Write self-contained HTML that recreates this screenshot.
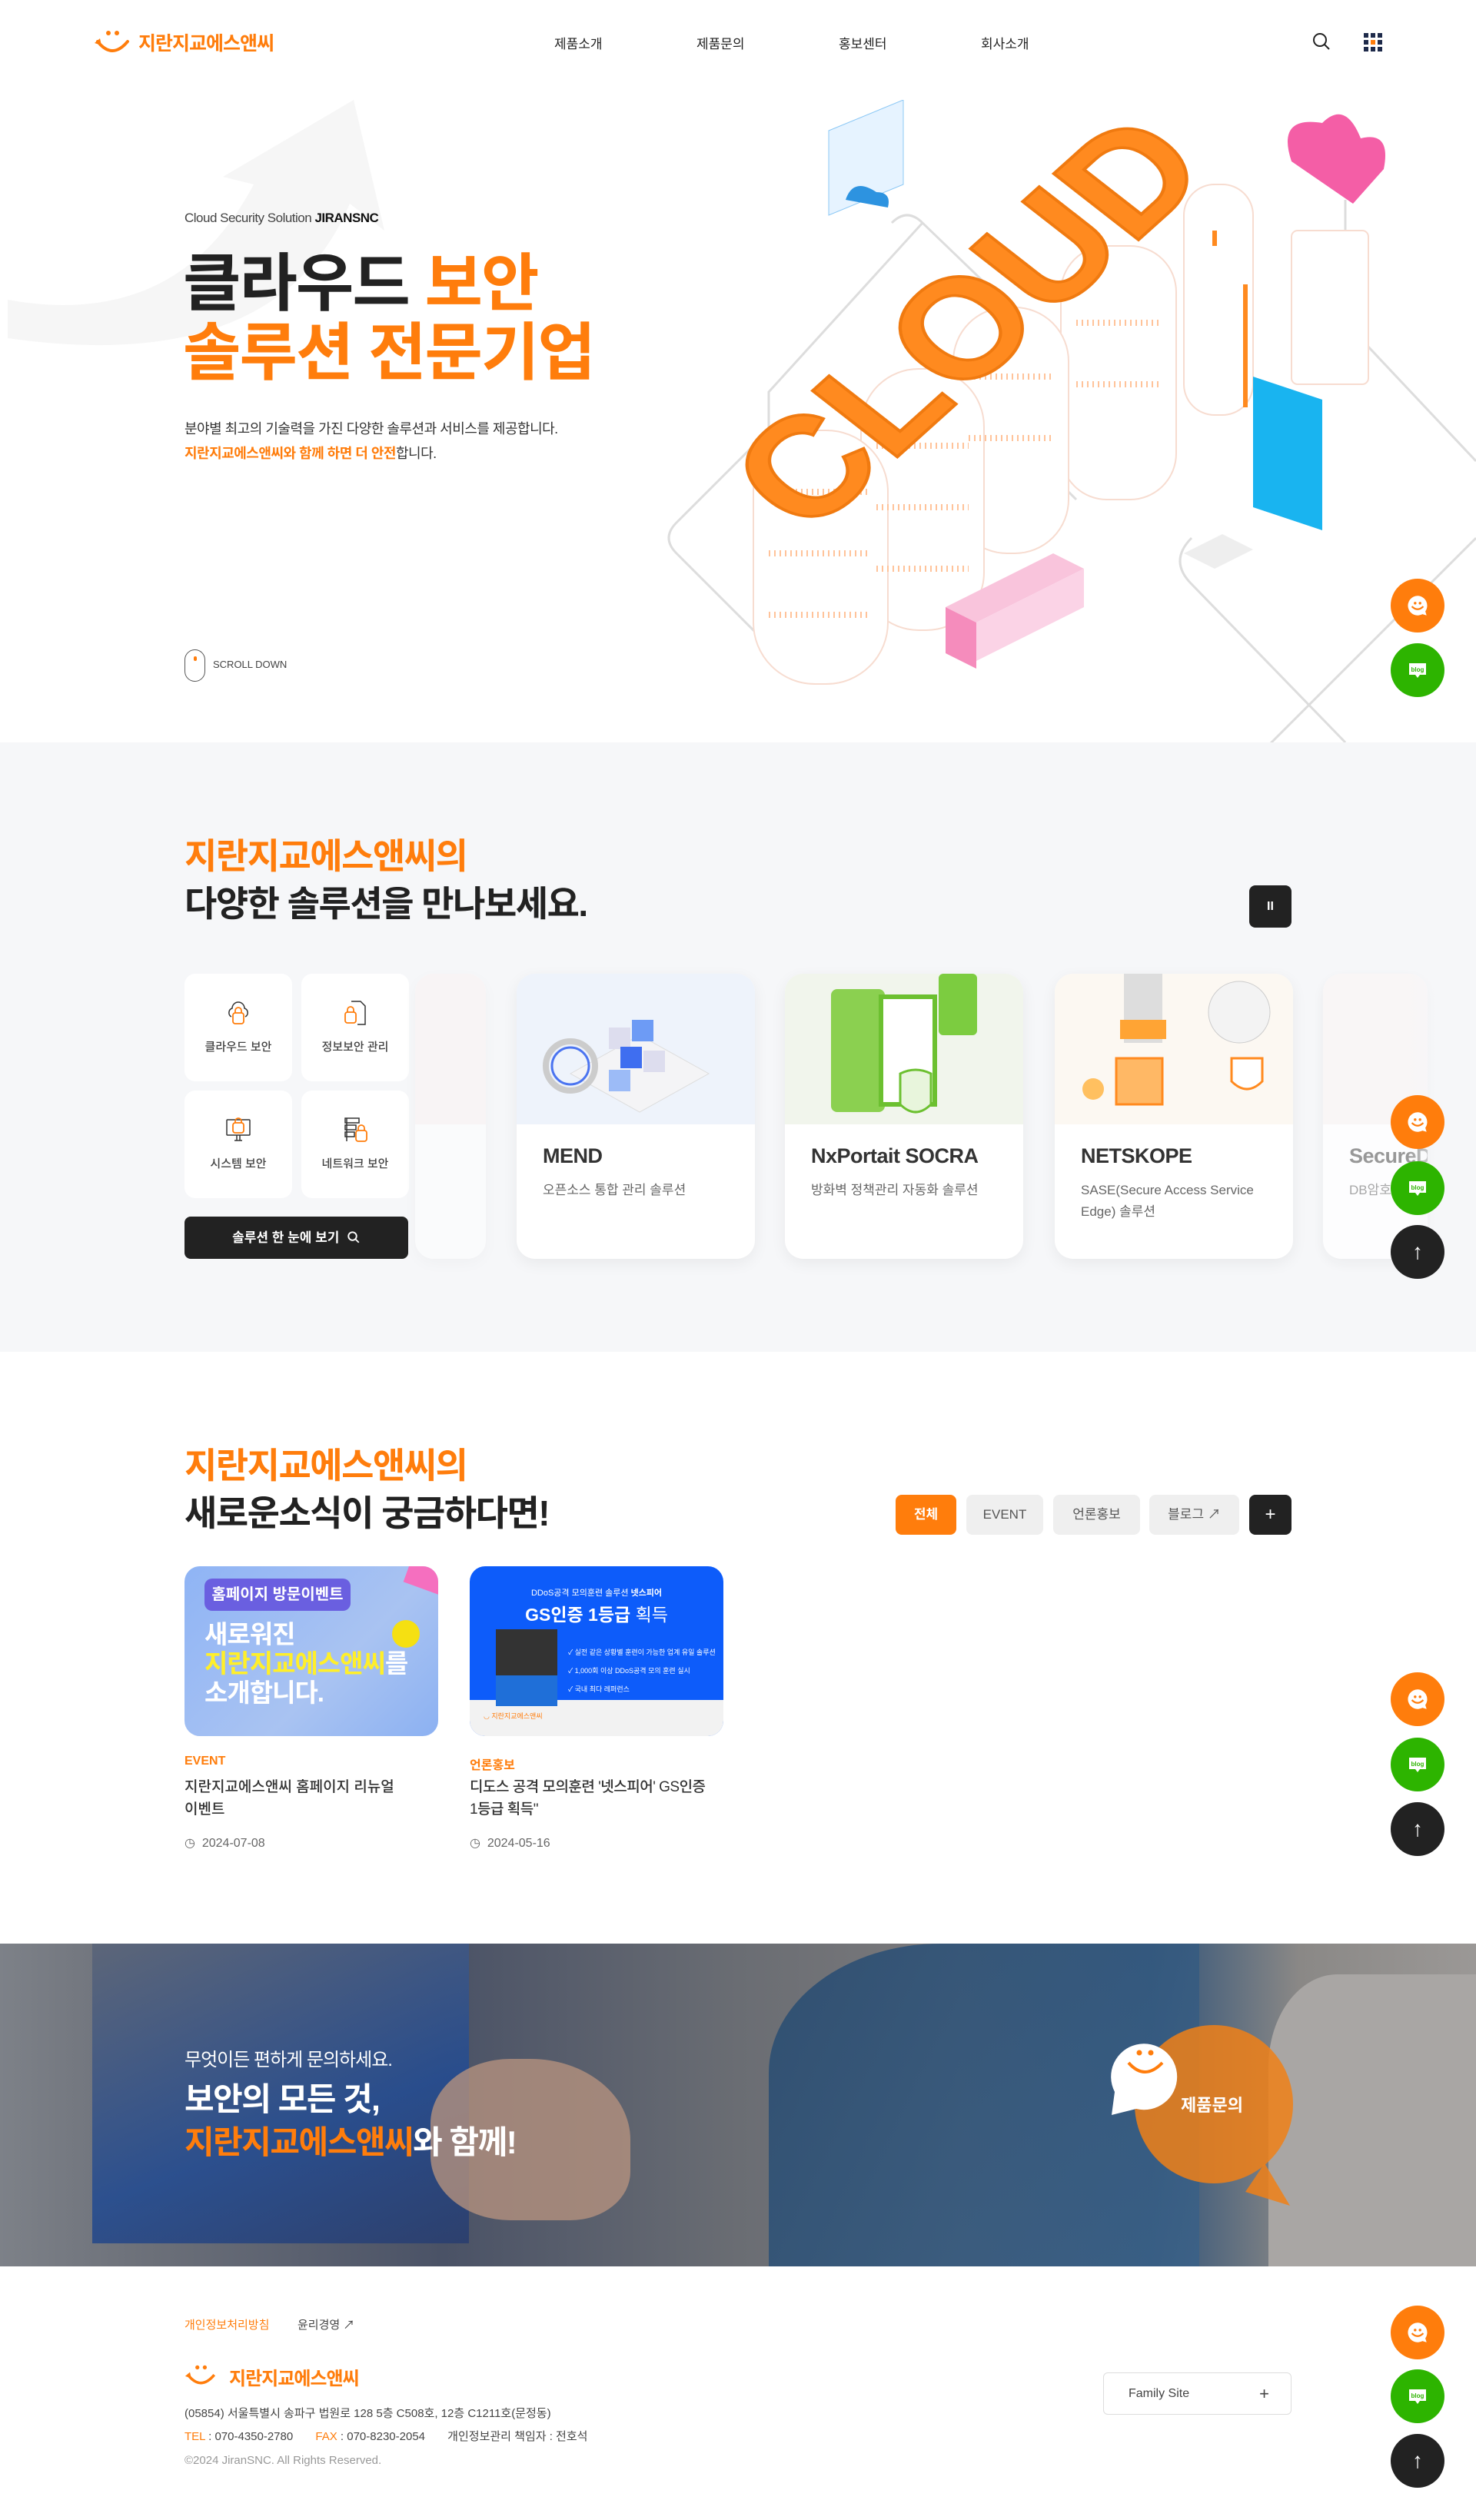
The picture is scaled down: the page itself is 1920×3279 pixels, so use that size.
<!DOCTYPE html>
<html lang="ko"><head><meta charset="utf-8">
<style>
*{margin:0;padding:0;box-sizing:border-box}
html{height:3279px;overflow:hidden}
body{width:1920px;height:3279px;position:relative;overflow:hidden;background:#fff;font-family:"Liberation Sans","Noto Sans CJK KR",sans-serif;color:#222;word-break:keep-all}
.a{position:absolute}
.o{color:#ff7d0c}
.nav{font-size:17px;color:#222;top:43px}
.tile{position:absolute;width:140px;height:140px;background:#fff;border-radius:14px;text-align:center;font-size:15px;color:#444;font-weight:500}
.tile svg{margin-top:34px}
.tile div{margin-top:12px}
.card{position:absolute;top:1267px;width:310px;height:371px;background:#fff;border-radius:24px;overflow:hidden;box-shadow:0 6px 20px rgba(0,0,0,.06)}
.card .img{height:196px}
.card h3{position:absolute;left:34px;top:222px;font-size:27px;color:#333;font-weight:700;letter-spacing:-.5px}
.card p{position:absolute;left:34px;top:268px;font-size:17px;color:#666;line-height:28px;width:250px}
.tab{position:absolute;top:1945px;height:52px;border-radius:8px;background:#efefef;color:#555;font-size:17px;line-height:52px;text-align:center}
.fb{position:absolute;left:1809px;width:70px;height:70px;border-radius:50%;display:flex;align-items:center;justify-content:center;color:#fff;font-size:28px}
.fo{background:#ff7d0c}.fg{background:#2db400}.fk{background:#222}
</style></head><body>

<!-- header -->
<svg class="a" style="left:122px;top:38px" width="50" height="34" viewBox="0 0 50 34"><circle cx="19" cy="5" r="3" fill="#ff7d0c"/><circle cx="30" cy="5" r="3" fill="#ff7d0c"/><path d="M5 16 Q24 40 44 16" stroke="#ff7d0c" stroke-width="4" fill="none" stroke-linecap="round"/><path d="M1 18 L8 12 L10 21Z" fill="#ff7d0c"/></svg>
<div class="a o" style="left:180px;top:37px;font-size:25px;font-weight:700;letter-spacing:-1px">지란지교에스앤씨</div>
<div class="a nav" style="left:721px">제품소개</div>
<div class="a nav" style="left:906px">제품문의</div>
<div class="a nav" style="left:1091px">홍보센터</div>
<div class="a nav" style="left:1276px">회사소개</div>
<svg class="a" style="left:1707px;top:42px" width="24" height="24" viewBox="0 0 24 24"><circle cx="10" cy="10" r="8" stroke="#222" stroke-width="2" fill="none"/><path d="M16 16 L22 22" stroke="#222" stroke-width="2"/></svg>
<svg class="a" style="left:1774px;top:43px" width="25" height="25" viewBox="0 0 25 25"><g fill="#1e2a4a"><rect x="0" y="0" width="6" height="6"/><rect x="9" y="0" width="6" height="6"/><rect x="18" y="0" width="6" height="6"/><rect x="0" y="9" width="6" height="6"/><rect x="9" y="9" width="6" height="6" fill="#ff7d0c"/><rect x="18" y="9" width="6" height="6"/><rect x="0" y="18" width="6" height="6"/><rect x="9" y="18" width="6" height="6"/><rect x="18" y="18" width="6" height="6"/></g></svg>

<!-- hero -->
<svg class="a" style="left:0;top:130px" width="560" height="330" viewBox="0 0 560 330"><path d="M10 260 Q230 300 330 110 L290 100 L460 0 L500 170 L455 135 Q360 360 10 310Z" fill="#f6f6f6"/></svg>
<div class="a" style="left:240px;top:274px;font-size:17px;color:#444;letter-spacing:-.5px">Cloud Security Solution <b style="color:#111">JIRANSNC</b></div>
<div class="a" style="left:238px;top:325px;font-size:82px;font-weight:700;line-height:90px;letter-spacing:-2px;color:#222">클라우드 <span class="o">보안</span><br><span class="o">솔루션 전문기업</span></div>
<div class="a" style="left:240px;top:542px;font-size:18px;color:#333;line-height:32px;letter-spacing:-.5px">분야별 최고의 기술력을 가진 다양한 솔루션과 서비스를 제공합니다.<br><b class="o">지란지교에스앤씨와 함께 하면 더 안전</b>합니다.</div>
<div class="a" style="left:240px;top:845px;width:27px;height:42px;border:1.5px solid #555;border-radius:14px"><div style="width:4px;height:6px;background:#ff7d0c;border-radius:2px;margin:8px auto"></div></div>
<div class="a" style="left:277px;top:857px;font-size:13px;color:#444">SCROLL DOWN</div>

<svg class="a" style="left:860px;top:130px" width="1060" height="836" viewBox="860 130 1060 836">
<g stroke="#ddd" stroke-width="3" fill="none">
<path d="M1160 290 Q1180 270 1200 290 L1480 560"/>
<path d="M1200 290 L1000 510 L1000 560"/>
<path d="M1750 260 L1750 410 Q1750 420 1760 430 L1920 600"/>
<path d="M1000 560 L880 680 Q860 700 880 720 L1020 860 Q1040 880 1060 860 L1310 600 Q1330 580 1350 600 L1400 650"/>
<path d="M1920 700 L1630 990"/>
<path d="M1550 700 Q1520 730 1550 760 L1750 966"/>
</g>
<g fill="#fff" stroke="#f7dcd0" stroke-width="2">
<rect x="1680" y="300" width="100" height="200" rx="8"/>
<rect x="1540" y="240" width="90" height="300" rx="40"/>
<rect x="1380" y="320" width="150" height="330" rx="60"/>
<rect x="1240" y="400" width="150" height="320" rx="70"/>
<rect x="1120" y="480" width="160" height="340" rx="75"/>
<rect x="980" y="560" width="175" height="330" rx="80"/>
</g>
<g fill="none" stroke="#ffc39a" stroke-width="8" stroke-dasharray="2 5">
<path d="M1000 640 h130 M1000 720 h130 M1000 800 h130 M1140 580 h120 M1140 660 h120 M1140 740 h120 M1260 490 h110 M1260 570 h110 M1400 420 h110 M1400 500 h110"/>
</g>
<path d="M1580 320 L1580 300 M1620 370 L1620 530" stroke="#ff8a1f" stroke-width="6"/>
<g font-family="Liberation Sans,sans-serif" font-weight="700" font-size="200" fill="#ff8a1f" stroke="#f07a10" stroke-width="4" transform="translate(1050 700) rotate(-42) skewX(10)"><text x="0" y="0">CLOUD</text></g>
<path d="M1230 790 L1370 720 L1410 740 L1270 810Z" fill="#f9c4dc"/><path d="M1230 790 L1270 810 L1270 870 L1230 850Z" fill="#f58cbc"/><path d="M1270 810 L1410 740 L1410 790 L1270 860Z" fill="#fbd3e6"/>
<path d="M1078 170 L1175 130 L1175 240 L1078 280Z" fill="#e6f3ff" stroke="#8cc8f5"/>
<path d="M1100 260 q10 -30 40 -10 q20 0 15 20z" fill="#2d93e0"/>
<path d="M1630 490 L1720 520 L1720 690 L1630 660Z" fill="#19b4f0"/>
<path d="M1680 210 q-20 -60 40 -50 q30 -30 50 20 q40 -10 30 40 L1760 265Z" fill="#f45ea6"/>
<path d="M1540 720 L1590 695 L1630 715 L1580 740Z" fill="#eee"/>
</svg>

<!-- solutions -->
<div class="a" style="left:0;top:966px;width:1920px;height:793px;background:#f6f7f9"></div>
<div class="a" style="left:240px;top:1083px;font-size:46px;font-weight:700;line-height:62px;letter-spacing:-1.5px"><span class="o">지란지교에스앤씨의</span><br>다양한 솔루션을 만나보세요.</div>
<div class="a" style="left:1625px;top:1152px;width:55px;height:55px;border-radius:8px;background:#222;color:#fff;text-align:center;line-height:55px;font-size:16px;font-weight:700">II</div>

<div class="tile" style="left:240px;top:1267px"><svg width="34" height="34" viewBox="0 0 34 34" fill="none"><path d="M8 22 a6 6 0 0 1 1-11 a8 8 0 0 1 16 0 a6 6 0 0 1 1 11" stroke="#333" stroke-width="1.5"/><rect x="10" y="17" width="14" height="14" rx="3" stroke="#ff7d0c" stroke-width="1.8"/><path d="M13 17 v-3 a4 4 0 0 1 8 0 v3" stroke="#ff7d0c" stroke-width="1.8"/></svg><div>클라우드 보안</div></div>
<div class="tile" style="left:392px;top:1267px"><svg width="34" height="34" viewBox="0 0 34 34" fill="none"><path d="M12 2 h12 l6 6 v24 h-10" stroke="#333" stroke-width="1.5"/><rect x="4" y="16" width="14" height="14" rx="3" stroke="#ff7d0c" stroke-width="1.8"/><path d="M7 16 v-3 a4 4 0 0 1 8 0 v3" stroke="#ff7d0c" stroke-width="1.8"/></svg><div>정보보안 관리</div></div>
<div class="tile" style="left:240px;top:1419px"><svg width="34" height="34" viewBox="0 0 34 34" fill="none"><rect x="2" y="4" width="30" height="20" rx="1" stroke="#333" stroke-width="1.5"/><path d="M12 31 h10 M15 24 v7 M19 24 v7" stroke="#333" stroke-width="1.5"/><rect x="10" y="8" width="14" height="13" rx="3" stroke="#ff7d0c" stroke-width="1.8"/><path d="M13 8 v-2 a4 4 0 0 1 8 0 v2" stroke="#ff7d0c" stroke-width="1.8"/></svg><div>시스템 보안</div></div>
<div class="tile" style="left:392px;top:1419px"><svg width="34" height="34" viewBox="0 0 34 34" fill="none"><path d="M4 2 h18 v6 h-18z M4 11 h14 v6 h-14z M4 20 h12 v6 h-12z M6 2 v30" stroke="#333" stroke-width="1.5"/><rect x="18" y="18" width="14" height="14" rx="3" stroke="#ff7d0c" stroke-width="1.8"/><path d="M21 18 v-3 a4 4 0 0 1 8 0 v3" stroke="#ff7d0c" stroke-width="1.8"/></svg><div>네트워크 보안</div></div>
<div class="a" style="left:240px;top:1583px;width:291px;height:55px;border-radius:8px;background:#222;color:#fff;font-size:17px;font-weight:700;text-align:center;line-height:55px">솔루션 한 눈에 보기 &nbsp;<svg width="18" height="18" viewBox="0 0 24 24" style="vertical-align:-3px"><circle cx="10" cy="10" r="7" stroke="#fff" stroke-width="2.5" fill="none"/><path d="M15 15 L21 21" stroke="#fff" stroke-width="2.5"/></svg></div>

<div class="card" style="left:540px;width:92px;opacity:.5"><div class="img" style="background:#fbf3f3"></div></div>
<div class="card" style="left:672px"><div class="img" style="background:#eef3fb"><svg width="310" height="196" viewBox="0 0 310 196"><path d="M70 130 L160 80 L250 130 L160 180Z" fill="#f4f4f6" stroke="#ddd"/><g fill="#dde"><rect x="120" y="70" width="28" height="28"/><rect x="150" y="60" width="28" height="28" fill="#6d9bf5"/><rect x="135" y="95" width="28" height="28" fill="#3f6ef0"/><rect x="165" y="100" width="28" height="28"/><rect x="120" y="125" width="28" height="28" fill="#9cbbf7"/></g><circle cx="70" cy="120" r="32" fill="none" stroke="#ccc" stroke-width="8"/><circle cx="70" cy="120" r="24" fill="none" stroke="#4b74f0" stroke-width="3"/></svg></div><h3>MEND</h3><p>오픈소스 통합 관리 솔루션</p></div>
<div class="card" style="left:1021px"><div class="img" style="background:#f1f5ec"><svg width="310" height="196" viewBox="0 0 310 196"><rect x="60" y="20" width="70" height="160" rx="8" fill="#8bd050"/><rect x="125" y="30" width="70" height="140" fill="#fff" stroke="#6cc030" stroke-width="6"/><rect x="200" y="0" width="50" height="80" rx="6" fill="#7ccc40"/><path d="M150 130 q20 -10 40 0 v40 q-20 20 -40 0z" fill="#e8f5dc" stroke="#6cc030" stroke-width="3"/></svg></div><h3>NxPortait SOCRA</h3><p>방화벽 정책관리 자동화 솔루션</p></div>
<div class="card" style="left:1372px"><div class="img" style="background:#fcf8f2"><svg width="310" height="196" viewBox="0 0 310 196"><rect x="90" y="0" width="50" height="90" fill="#ddd"/><rect x="85" y="60" width="60" height="25" fill="#ffa434"/><rect x="80" y="110" width="60" height="60" fill="#ffb865" stroke="#ff8a1f" stroke-width="3"/><circle cx="240" cy="50" r="40" fill="#f3f3f3" stroke="#ccc"/><path d="M230 110 h40 v30 q-20 20 -40 0z" fill="#fff" stroke="#ff8a1f" stroke-width="3"/><circle cx="50" cy="150" r="14" fill="#ffc060"/></svg></div><h3>NETSKOPE</h3><p>SASE(Secure Access Service Edge) 솔루션</p></div>
<div class="card" style="left:1721px;width:136px;opacity:.85"><div class="img" style="background:#faf6f6"></div><h3 style="color:#888">SecureDB</h3><p style="color:#999">DB암호화</p></div>
<div class="a" style="left:1830px;top:1260px;width:90px;height:400px;background:linear-gradient(90deg,rgba(246,247,249,0),#f6f7f9 60%)"></div>

<!-- news -->
<div class="a" style="left:240px;top:1876px;font-size:46px;font-weight:700;line-height:62px;letter-spacing:-1.5px"><span class="o">지란지교에스앤씨의</span><br>새로운소식이 궁금하다면!</div>
<div class="tab" style="left:1165px;width:79px;background:#ff7d0c;color:#fff;font-weight:700">전체</div>
<div class="tab" style="left:1257px;width:100px">EVENT</div>
<div class="tab" style="left:1370px;width:113px">언론홍보</div>
<div class="tab" style="left:1495px;width:117px">블로그 ↗</div>
<div class="tab" style="left:1625px;width:55px;background:#222;color:#fff;font-size:24px">+</div>

<div class="a" style="left:240px;top:2038px;width:330px;height:221px;border-radius:20px;overflow:hidden;background:linear-gradient(135deg,#8fb4f5,#a9c3f2 60%,#8cb1f2)">
<div class="a" style="left:26px;top:16px;width:190px;height:42px;border-radius:10px;background:#6a5fe0;color:#fff;font-weight:700;font-size:20px;line-height:42px;text-align:center">홈페이지 방문이벤트</div>
<div class="a" style="left:270px;top:70px;width:36px;height:36px;border-radius:50%;background:#f5e012"></div>
<div class="a" style="left:290px;top:-10px;width:50px;height:40px;background:#f56fbf;transform:rotate(20deg)"></div>
<div class="a" style="left:26px;top:70px;color:#fff;font-size:33px;font-weight:700;line-height:38px;letter-spacing:-1px">새로워진<br><span style="color:#ffef2a">지란지교에스앤씨</span>를<br>소개합니다.</div></div>
<div class="a" style="left:611px;top:2038px;width:330px;height:221px;border-radius:20px;overflow:hidden;background:#0d5cfa">
<div class="a" style="left:0;top:174px;width:330px;height:47px;background:#f2f2f2"></div>
<div class="a" style="left:0;top:26px;width:330px;text-align:center;color:#fff;font-size:11px">DDoS공격 모의훈련 솔루션 <b>넷스피어</b></div>
<div class="a" style="left:0;top:44px;width:330px;text-align:center;color:#fff;font-size:23px;font-weight:700">GS인증 1등급 <span style="font-weight:400">획득</span></div>
<div class="a" style="left:34px;top:82px;width:80px;height:100px;background:linear-gradient(#333 0 60%,#1f6fd8 60%)"></div>
<div class="a" style="left:128px;top:100px;color:#fff;font-size:9px;line-height:24px">✓ 실전 같은 상황별 훈련이 가능한 업계 유일 솔루션<br>✓ 1,000회 이상 DDoS공격 모의 훈련 실시<br>✓ 국내 최다 레퍼런스</div>
<div class="a" style="left:18px;top:188px;color:#ff7d0c;font-size:9px">◡ 지란지교에스앤씨</div></div>
<div class="a o" style="left:240px;top:2283px;font-size:16px;font-weight:700">EVENT</div>
<div class="a" style="left:240px;top:2311px;font-size:19px;color:#333;line-height:29px;font-weight:500;width:320px">지란지교에스앤씨 홈페이지 리뉴얼 이벤트</div>
<div class="a" style="left:240px;top:2388px;font-size:16px;color:#666">◷ &nbsp;2024-07-08</div>
<div class="a o" style="left:611px;top:2283px;font-size:16px;font-weight:700">언론홍보</div>
<div class="a" style="left:611px;top:2311px;font-size:19px;color:#333;line-height:29px;font-weight:500;width:345px;letter-spacing:-.5px">디도스 공격 모의훈련 '넷스피어' GS인증 1등급 획득"</div>
<div class="a" style="left:611px;top:2388px;font-size:16px;color:#666">◷ &nbsp;2024-05-16</div>

<!-- banner -->
<div class="a" style="left:0;top:2529px;width:1920px;height:420px;overflow:hidden;background:linear-gradient(90deg,#7d8188 0,#6c7079 10%,#4a5266 30%,#6a6d73 50%,#7b7a7c 65%,#2f5278 78%,#8a8886 88%,#9b9896 100%)">
<div class="a" style="left:120px;top:0;width:490px;height:390px;background:linear-gradient(160deg,#5a6478,#254c90 60%,#2a3e6e);opacity:.9"></div>
<div class="a" style="left:560px;top:150px;width:260px;height:210px;border-radius:40% 50% 30% 40%;background:#b4917e;opacity:.8"></div>
<div class="a" style="left:1000px;top:0;width:560px;height:420px;background:linear-gradient(120deg,#2a4c70,#3b6187);border-radius:40% 0 0 0;opacity:.9"></div>
<div class="a" style="left:1650px;top:40px;width:300px;height:400px;background:#a9a6a4;border-radius:30% 0 0 0"></div>
<div class="a" style="left:1476px;top:106px;width:206px;height:206px;border-radius:50%;background:rgba(240,128,24,.85)"></div>
</div>
<svg class="a" style="left:1440px;top:2630px" width="250" height="250" viewBox="0 0 250 250"><path d="M205 185 L238 240 L180 222Z" fill="rgba(240,128,24,.85)"/><path d="M10 92 a43 43 0 1 1 28 22 L6 122Z" fill="#fff"/><circle cx="42" cy="41" r="3.5" fill="#ff7d0c"/><circle cx="57" cy="41" r="3.5" fill="#ff7d0c"/><path d="M28 54 Q49 78 72 54" stroke="#ff7d0c" stroke-width="4" fill="none"/></svg>
<div class="a" style="left:1536px;top:2722px;color:#fff;font-size:22px;font-weight:700">제품문의</div>
<div class="a" style="left:240px;top:2660px;color:#fff;font-size:24px;letter-spacing:-1px">무엇이든 편하게 문의하세요.</div>
<div class="a" style="left:240px;top:2704px;color:#fff;font-size:42px;font-weight:700;line-height:56px;letter-spacing:-1.5px">보안의 모든 것,<br><span class="o">지란지교에스앤씨</span>와 함께!</div>

<!-- footer -->
<div class="a o" style="left:240px;top:3014px;font-size:15px">개인정보처리방침</div>
<div class="a" style="left:387px;top:3014px;font-size:15px;color:#444">윤리경영 ↗</div>
<svg class="a" style="left:240px;top:3076px" width="44" height="30" viewBox="0 0 50 34"><circle cx="19" cy="5" r="3" fill="#ff7d0c"/><circle cx="30" cy="5" r="3" fill="#ff7d0c"/><path d="M5 16 Q24 40 44 16" stroke="#ff7d0c" stroke-width="4" fill="none"/><path d="M1 18 L8 12 L10 21Z" fill="#ff7d0c"/></svg>
<div class="a o" style="left:298px;top:3075px;font-size:24px;font-weight:700;letter-spacing:-1px">지란지교에스앤씨</div>
<div class="a" style="left:240px;top:3129px;font-size:15px;color:#444">(05854) 서울특별시 송파구 법원로 128 5층 C508호, 12층 C1211호(문정동)</div>
<div class="a" style="left:240px;top:3159px;font-size:15px;color:#444"><span class="o">TEL</span> : 070-4350-2780 &nbsp;&nbsp;&nbsp;&nbsp;&nbsp; <span class="o">FAX</span> : 070-8230-2054 &nbsp;&nbsp;&nbsp;&nbsp;&nbsp; 개인정보관리 책임자 : 전호석</div>
<div class="a" style="left:240px;top:3193px;font-size:15px;color:#999">©2024 JiranSNC. All Rights Reserved.</div>
<div class="a" style="left:1435px;top:3087px;width:245px;height:55px;border:1px solid #ddd;border-radius:6px;font-size:16px;color:#444;line-height:53px;padding-left:32px">Family Site<span style="position:absolute;right:28px;font-size:22px">+</span></div>

<!-- floating buttons -->
<svg width="0" height="0" style="position:absolute"><defs>
<symbol id="sm" viewBox="0 0 32 32"><path d="M16 4 a12 12 0 1 0 6 22.5 L27 28 L25.5 23 A12 12 0 0 0 16 4Z" fill="#fff"/><circle cx="13" cy="13" r="1.6" fill="#ff7d0c"/><circle cx="19" cy="13" r="1.6" fill="#ff7d0c"/><path d="M9 17 Q16 24 23 17" stroke="#ff7d0c" stroke-width="2" fill="none"/></symbol>
<symbol id="bl" viewBox="0 0 32 32"><path d="M5 7 h22 v15 h-8 l-3 4 l-3 -4 h-8z" fill="#fff"/><text x="16" y="18" font-size="8" font-family="Liberation Sans" font-weight="700" fill="#2db400" text-anchor="middle">blog</text></symbol>
</defs></svg>
<div class="fb fo" style="top:753px"><svg width="34" height="34"><use href="#sm"/></svg></div><div class="fb fg" style="top:837px"><svg width="32" height="32"><use href="#bl"/></svg></div>
<div class="fb fo" style="top:1425px"><svg width="34" height="34"><use href="#sm"/></svg></div><div class="fb fg" style="top:1511px"><svg width="32" height="32"><use href="#bl"/></svg></div><div class="fb fk" style="top:1594px">↑</div>
<div class="fb fo" style="top:2176px"><svg width="34" height="34"><use href="#sm"/></svg></div><div class="fb fg" style="top:2261px"><svg width="32" height="32"><use href="#bl"/></svg></div><div class="fb fk" style="top:2345px">↑</div>
<div class="fb fo" style="top:3000px"><svg width="34" height="34"><use href="#sm"/></svg></div><div class="fb fg" style="top:3083px"><svg width="32" height="32"><use href="#bl"/></svg></div><div class="fb fk" style="top:3167px">↑</div>
</body></html>
